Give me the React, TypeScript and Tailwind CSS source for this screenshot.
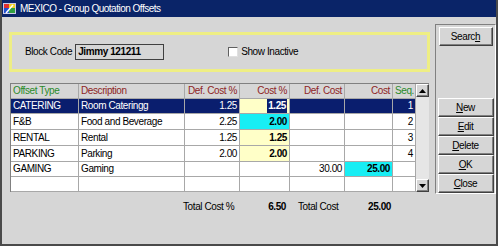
import React from "react";

type Row = {
    type: string;
    desc: string;
    defPct: string;
    pct: string;
    pctBg: string;
    defCost: string;
    cost: string;
    costBg: string;
    seq: string;
};

const rows: Row[] = [
    { type: "CATERING", desc: "Room Cateringg", defPct: "1.25", pct: "1.25", pctBg: "bg-[#ffffc8]", defCost: "", cost: "", costBg: "", seq: "1" },
    { type: "F&B", desc: "Food and Beverage", defPct: "2.25", pct: "2.00", pctBg: "bg-[#18eef4]", defCost: "", cost: "", costBg: "bg-white", seq: "2" },
    { type: "RENTAL", desc: "Rental", defPct: "1.25", pct: "1.25", pctBg: "bg-[#ffffc8]", defCost: "", cost: "", costBg: "bg-white", seq: "3" },
    { type: "PARKING", desc: "Parking", defPct: "2.00", pct: "2.00", pctBg: "bg-[#ffffc8]", defCost: "", cost: "", costBg: "bg-white", seq: "4" },
    { type: "GAMING", desc: "Gaming", defPct: "", pct: "", pctBg: "bg-white", defCost: "30.00", cost: "25.00", costBg: "bg-[#18eef4]", seq: "" },
    { type: "", desc: "", defPct: "", pct: "", pctBg: "bg-white", defCost: "", cost: "", costBg: "bg-white", seq: "" },
];

const raised =
    "border border-t-white border-l-white border-b-[#404040] border-r-[#404040] shadow-[inset_-1px_-1px_0_#808080] bg-[#d6d6d6] text-black flex items-center justify-center";

const cell = "border-r border-b border-[#a8a8a8] px-[2px] flex items-center whitespace-nowrap overflow-hidden";

const Btn = ({ pre, u, post, w = "w-[56px]" }: { pre?: string; u: string; post?: string; w?: string }) => (
    <div className={`${raised} h-[19px] ${w}`}>
        {pre}
        <span className="underline">{u}</span>
        {post}
    </div>
);

const Arrow = ({ up }: { up?: boolean }) => (
    <div className={`${raised} w-[13px] h-[13px]`}>
        <svg width="7" height="4" viewBox="0 0 7 4">
            <path d={up ? "M3.5 0 L7 4 L0 4 Z" : "M0 0 L7 0 L3.5 4 Z"} fill="#000" />
        </svg>
    </div>
);

export default function App() {
    return (
        <div className="w-[498px] h-[246px] bg-[#d6d6d6] flex flex-col border-l-2 border-r-2 border-b-2 border-[#4a4a4a] font-['Liberation_Sans',Arial,sans-serif] text-[10px] tracking-[-0.4px] text-black leading-none">
            <div className="h-[17px] bg-[#0a2468] flex items-center gap-[3px] pl-[1px] text-white text-[10px] tracking-[-0.5px]">
                <svg width="14" height="13" viewBox="0 0 14 13">
                    <rect x="0" y="1" width="13" height="11" fill="#c8c8e8" />
                    <rect x="1" y="2" width="5" height="4" fill="#e03030" />
                    <rect x="6" y="2" width="6" height="4" fill="#f0d020" />
                    <rect x="1" y="6" width="5" height="5" fill="#2050d0" />
                    <rect x="6" y="6" width="6" height="5" fill="#30a040" />
                    <path d="M3 11 L10 3" stroke="#fff" strokeWidth="1.5" />
                </svg>
                <span>MEXICO - Group Quotation Offsets</span>
            </div>

            <div className="flex flex-1">
                <div className="flex flex-col pl-[7px] pt-[15px] w-[428px]">
                    <div className="h-[40px] border-[3px] border-[#eeee84] flex items-center pl-[13px]">
                        <span className="mr-[3px]">Block Code</span>
                        <div className="w-[89px] h-[16px] border border-[#404040] flex items-center pl-[2px] font-bold">
                            Jimmy 121211
                        </div>
                        <div className="ml-[64px] w-[10px] h-[10px] bg-white border border-t-[#606060] border-l-[#606060] border-b-[#e0e0e0] border-r-[#e0e0e0]" />
                        <span className="ml-[3px]">Show Inactive</span>
                    </div>

                    <div className="mt-[11px] ml-[1px] flex border-l border-t border-[#808080] w-[419px]">
                        <div className="grid grid-cols-[68px_106px_55px_50px_55px_48px_23px] grid-rows-[15px_15px_16px_16px_16px_15px_15px]">
                            <div className={`${cell} text-[#2a8a2a]`}>Offset Type</div>
                            <div className={`${cell} text-[#8e2424]`}>Description</div>
                            <div className={`${cell} text-[#8e2424] justify-end`}>Def. Cost %</div>
                            <div className={`${cell} text-[#8e2424] justify-end`}>Cost %</div>
                            <div className={`${cell} text-[#8e2424] justify-end`}>Def. Cost</div>
                            <div className={`${cell} text-[#8e2424] justify-end`}>Cost</div>
                            <div className={`${cell} text-[#2a8a2a]`}>Seq.</div>
                            {rows.map((r, i) => {
                                const sel = i === 0;
                                const base = sel ? "bg-[#0a1e6e] text-white" : "bg-white";
                                return (
                                    <React.Fragment key={i}>
                                        <div className={`${cell} ${base}`}>{r.type}</div>
                                        <div className={`${cell} ${base}`}>{r.desc}</div>
                                        <div className={`${cell} ${base} justify-end`}>{r.defPct}</div>
                                        <div className={`${cell} ${r.pctBg} justify-end font-bold`}>
                                            {sel ? (
                                                <span className="bg-[#0a1e6e] text-white px-[1px] py-[2px]">{r.pct}</span>
                                            ) : (
                                                r.pct
                                            )}
                                        </div>
                                        <div className={`${cell} ${base} justify-end`}>{r.defCost}</div>
                                        <div className={`${cell} ${sel ? base : r.costBg} justify-end font-bold`}>{r.cost}</div>
                                        <div className={`${cell} ${base} justify-end`}>{r.seq}</div>
                                    </React.Fragment>
                                );
                            })}
                        </div>
                        <div className="w-[13px] flex flex-col bg-[#e6e6e6]">
                            <Arrow up />
                            <div className="flex-1" />
                            <Arrow />
                        </div>
                    </div>

                    <div className="mt-[9px] ml-[1px] grid grid-cols-[68px_106px_55px_50px_55px_48px_23px] h-[12px] items-center">
                        <div />
                        <div />
                        <div className="whitespace-nowrap -ml-[1px]">Total Cost %</div>
                        <div className="text-right font-bold pr-[3px]">6.50</div>
                        <div className="pl-[9px] whitespace-nowrap">Total Cost</div>
                        <div className="text-right font-bold pr-[1px]">25.00</div>
                        <div />
                    </div>
                </div>

                <div className="ml-[5px] mt-[7px] w-[61px] h-[170px] border border-t-[#808080] border-l-[#808080] border-b-white border-r-white flex flex-col items-center pt-[2px]">
                    <Btn pre="Searc" u="h" w="w-[54px]" />
                    <div className="mt-[52px] flex flex-col">
                        <Btn u="N" post="ew" />
                        <Btn u="E" post="dit" />
                        <Btn u="D" post="elete" />
                        <Btn u="O" post="K" />
                        <Btn u="C" post="lose" />
                    </div>
                </div>
            </div>
        </div>
    );
}
